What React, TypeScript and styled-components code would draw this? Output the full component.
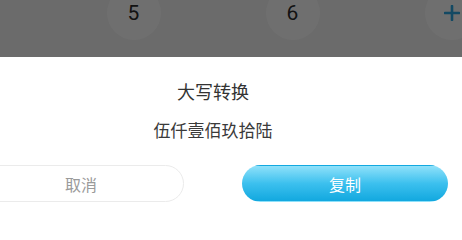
import React from 'react';
import styled, { createGlobalStyle } from 'styled-components';

const GlobalStyle = createGlobalStyle`
  html, body {
    margin: 0;
    padding: 0;
    background: #ffffff;
    overflow: hidden;
  }
  body {
    font-family: "Noto Sans CJK SC", "Noto Sans", sans-serif;
  }
`;

const StyledScreen = styled.div`
  width: 462px;
  height: 206px;
  position: relative;
  overflow: hidden;
  display: flex;
  flex-direction: column;
`;

const StyledKeypad = styled.div`
  height: 57px;
  flex-shrink: 0;
  position: relative;
  background: #ededed;
  overflow: hidden;
`;

const StyledKeyRow = styled.div`
  display: grid;
  grid-template-columns: repeat(3, 159px);
  margin-left: 54px;
  margin-top: -14px;
`;

const StyledKeyCell = styled.div`
  display: flex;
  justify-content: center;
`;

const StyledKey = styled.div`
  width: 54px;
  height: 54px;
  border-radius: 50%;
  background: #f6f6f6;
  display: flex;
  align-items: center;
  justify-content: center;
  font-family: "Roboto", "Noto Sans", sans-serif;
  font-size: 21px;
  color: #2a2a2a;
`;

const StyledMask = styled.div`
  position: absolute;
  inset: 0;
  background: rgba(0, 0, 0, 0.55);
`;

const StyledSheet = styled.div`
  flex: 1;
  background: #ffffff;
  margin-left: -30px;
  width: 486px;
  box-sizing: border-box;
  padding: 22px 8px 0;
  display: flex;
  flex-direction: column;
  align-items: center;
`;

const StyledTitle = styled.div`
  font-size: 18px;
  line-height: 24px;
  color: #333333;
`;

const StyledValue = styled.div`
  margin-top: 15px;
  font-size: 17px;
  line-height: 24px;
  color: #3a3a3a;
`;

const StyledActions = styled.div`
  margin-top: 23px;
  width: 100%;
  display: grid;
  grid-template-columns: 1fr 1fr;
  gap: 58px;
`;

const StyledButton = styled.button<{ $primary?: boolean }>`
  height: 37px;
  border-radius: 19px;
  font-family: inherit;
  font-size: 16px;
  display: flex;
  align-items: center;
  justify-content: center;
  cursor: pointer;
  border: 1px solid ${(p) => (p.$primary ? 'transparent' : '#ebebeb')};
  color: ${(p) => (p.$primary ? '#ffffff' : '#9a9a9a')};
  background: ${(p) =>
    p.$primary ? 'linear-gradient(180deg, #8fe1fa 0%, #3cc0ee 50%, #12a8df 100%)' : '#ffffff'};
`;

const PlusIcon = () => (
  <svg width="16" height="16" viewBox="0 0 16 16">
    <path d="M8 1v14M1 8h14" stroke="#2aa3dc" strokeWidth="2.6" strokeLinecap="round" />
  </svg>
);

export default function App() {
  return (
    <>
      <GlobalStyle />
      <StyledScreen>
        <StyledKeypad>
          <StyledKeyRow>
            <StyledKeyCell>
              <StyledKey>5</StyledKey>
            </StyledKeyCell>
            <StyledKeyCell>
              <StyledKey>6</StyledKey>
            </StyledKeyCell>
            <StyledKeyCell>
              <StyledKey>
                <PlusIcon />
              </StyledKey>
            </StyledKeyCell>
          </StyledKeyRow>
          <StyledMask />
        </StyledKeypad>
        <StyledSheet>
          <StyledTitle>大写转换</StyledTitle>
          <StyledValue>伍仟壹佰玖拾陆</StyledValue>
          <StyledActions>
            <StyledButton>取消</StyledButton>
            <StyledButton $primary>复制</StyledButton>
          </StyledActions>
        </StyledSheet>
      </StyledScreen>
    </>
  );
}
